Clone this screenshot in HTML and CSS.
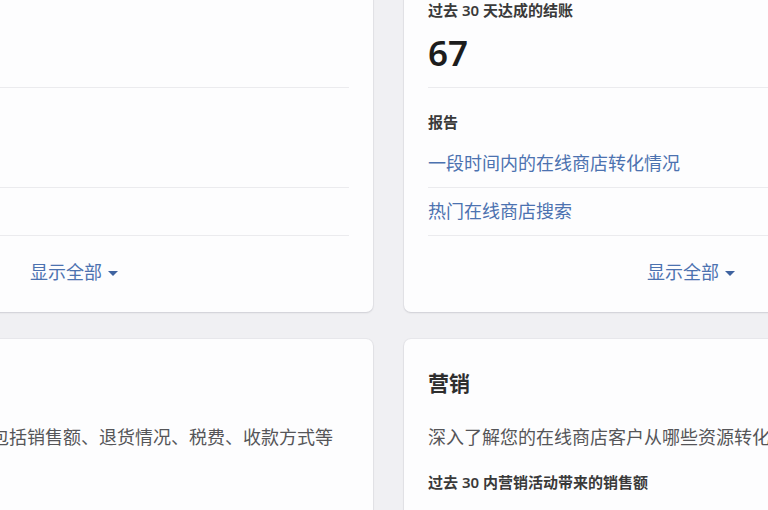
FILE: index.html
```html
<!DOCTYPE html>
<html lang="zh-CN">
<head>
<meta charset="utf-8">
<title>分析</title>
<link rel="stylesheet" href="styles.css">
</head>
<body>
<main class="page">
  <section class="card">
    <div class="stat">
      <div class="stat-label">过去 30 天的总销售额</div>
      <div class="stat-value">¥8,420</div>
    </div>
    <div class="reports">
      <div class="reports-title">报告</div>
      <a class="report-link" href="#">按渠道划分的销售额</a>
      <a class="report-link" href="#">随时间的销售额</a>
    </div>
    <div class="card-footer">
      <a class="show-all" href="#">显示全部<span class="caret"></span></a>
    </div>
  </section>

  <section class="card">
    <div class="stat">
      <div class="stat-label">过去 30 天达成的结账</div>
      <div class="stat-value">67</div>
    </div>
    <div class="reports">
      <div class="reports-title">报告</div>
      <a class="report-link" href="#">一段时间内的在线商店转化情况</a>
      <a class="report-link" href="#">热门在线商店搜索</a>
    </div>
    <div class="card-footer">
      <a class="show-all" href="#">显示全部<span class="caret"></span></a>
    </div>
  </section>

  <section class="card card-lower">
    <h2 class="card-title">财务</h2>
    <p class="card-text">查看商店的财务报告，包括销售额、退货情况、税费、收款方式等</p>
    <div class="stat-label lower-label">过去 30 天的净销售额</div>
  </section>

  <section class="card card-lower">
    <h2 class="card-title">营销</h2>
    <p class="card-text">深入了解您的在线商店客户从哪些资源转化而来，并分析营销活动的效果</p>
    <div class="stat-label lower-label">过去 30 内营销活动带来的销售额</div>
  </section>
</main>
</body>
</html>
```

FILE: styles.css
```css
html, body {
  margin: 0;
  padding: 0;
  overflow: hidden;
  background: #f0f0f3;
  width: 768px;
  height: 510px;
}

body {
  font-family: "Noto Sans", "Noto Sans CJK SC", sans-serif;
  color: #303030;
}

.page {
  display: grid;
  grid-template-columns: 586px 586px;
  column-gap: 31px;
  row-gap: 27px;
  margin: -20px 0 0 -213px;
  width: 1203px;
}

.card {
  background: #fdfdfe;
  border-radius: 7px;
  box-shadow: 0 0 0 1px rgba(60, 60, 70, 0.04), 0 1px 2px rgba(60, 60, 70, 0.14);
  padding: 0 24px;
  display: flex;
  flex-direction: column;
}

.stat {
  padding: 20px 0 12px;
}

.stat-label {
  font-size: 15px;
  line-height: 20px;
  font-weight: 600;
  color: #3a3a3a;
}

.stat-value {
  margin-top: 11px;
  font-size: 35px;
  line-height: 44px;
  font-weight: 600;
  color: #1c1c1c;
}

.reports {
  border-top: 1px solid #ebebee;
  padding-top: 24px;
  display: flex;
  flex-direction: column;
}

.reports-title {
  font-size: 15px;
  line-height: 20px;
  font-weight: 600;
  color: #3a3a3a;
  margin-bottom: 8px;
}

.report-link {
  font-size: 18px;
  line-height: 23px;
  padding: 12px 0;
  color: #4c72b0;
  text-decoration: none;
}

.report-link + .report-link {
  border-top: 1px solid #ebebee;
}

.card-footer {
  border-top: 1px solid #ebebee;
  padding: 24px 12px 28px 0;
  display: flex;
  justify-content: center;
}

.show-all {
  display: flex;
  align-items: center;
  gap: 6px;
  font-size: 18px;
  line-height: 24px;
  color: #4c72b0;
  text-decoration: none;
}

.caret {
  width: 0;
  height: 0;
  border-left: 5.5px solid transparent;
  border-right: 5.5px solid transparent;
  border-top: 5px solid #3f63a0;
  margin-top: 2px;
}

.card-lower {
  padding-top: 30px;
  padding-bottom: 40px;
}

.card-title {
  margin: 0;
  font-size: 21px;
  line-height: 28px;
  font-weight: 700;
  color: #2e2e2e;
}

.card-text {
  margin: 28px 0 0;
  font-size: 18px;
  line-height: 24px;
  color: #555558;
  white-space: nowrap;
  overflow: hidden;
}

.lower-label {
  margin-top: 23px;
}
```
